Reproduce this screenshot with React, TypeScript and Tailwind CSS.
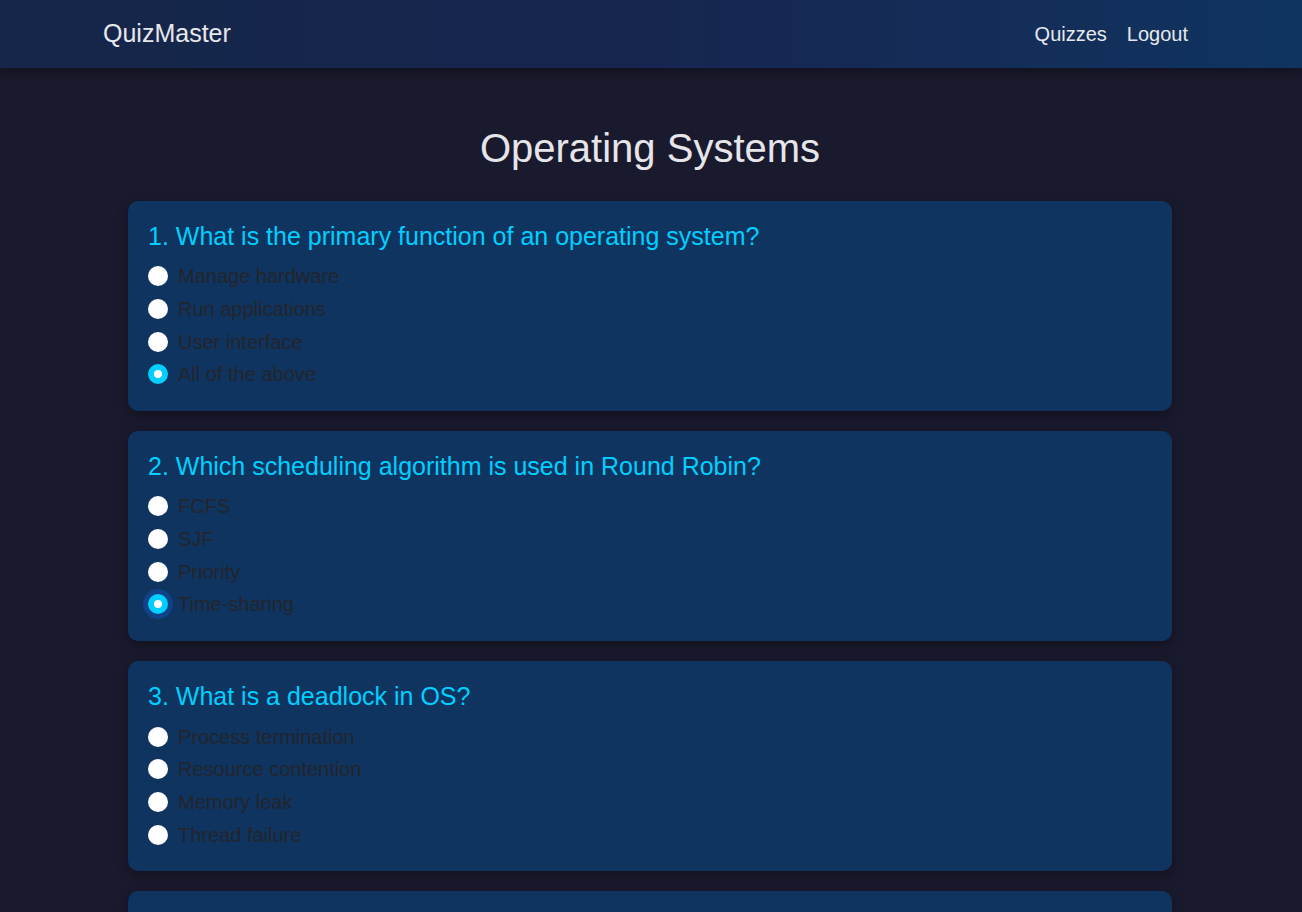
import React from "react";

type Question = {
  text: string;
  options: string[];
  selected?: number;
  focused?: boolean;
};

const questions: Question[] = [
  {
    text: "What is the primary function of an operating system?",
    options: ["Manage hardware", "Run applications", "User interface", "All of the above"],
    selected: 3,
  },
  {
    text: "Which scheduling algorithm is used in Round Robin?",
    options: ["FCFS", "SJF", "Priority", "Time-sharing"],
    selected: 3,
    focused: true,
  },
  {
    text: "What is a deadlock in OS?",
    options: ["Process termination", "Resource contention", "Memory leak", "Thread failure"],
  },
  {
    text: "Which memory management technique uses pages?",
    options: ["Segmentation", "Paging", "Swapping", "Compaction"],
  },
];

function Radio({ checked, focused }: { checked?: boolean; focused?: boolean }) {
  return (
    <span
      className={
        "relative flex h-5 w-5 shrink-0 items-center justify-center rounded-full " +
        (checked ? "bg-[#00cfff] " : "bg-white ") +
        (focused ? "ring-[5px] ring-[#0f4287]" : "")
      }
    >
      {checked && <span className="h-2 w-2 rounded-full bg-white" />}
    </span>
  );
}

export default function App() {
  return (
    <div
      className="min-h-screen bg-[#1a1a2e] pb-10"
      style={{ fontFamily: '"Liberation Sans", Arial, sans-serif' }}
    >
      <header className="flex h-[68px] items-center justify-between bg-gradient-to-r from-[#152649] via-[#162650] to-[#0f3460] pl-[103px] pr-[104px] shadow-[0_4px_10px_rgba(0,0,0,0.35)]">
        <span className="text-[25px] text-[#e8e8ec]">QuizMaster</span>
        <nav className="flex text-[20px] text-[#e8e8ec]">
          <a href="#" className="px-[10px]">Quizzes</a>
          <a href="#" className="px-[10px]">Logout</a>
        </nav>
      </header>

      <main className="ml-[128px] w-[1044px]">
        <h1 className="mt-[56px] mb-[29px] text-center text-[40px] leading-[48px] text-[#e6e6ea]">
          Operating Systems
        </h1>

        <div className="flex flex-col gap-[20.5px]">
          {questions.map((q, qi) => (
            <div
              key={qi}
              className="rounded-[10px] bg-[#0f3460] p-5 shadow-[0_4px_12px_rgba(0,0,0,0.35)]"
            >
              <h4 className="mb-[9px] text-[25px] leading-[30px] text-[#00cfff]">
                {qi + 1}. {q.text}
              </h4>
              <div className="flex flex-col">
                {q.options.map((opt, oi) => (
                  <label key={oi} className="flex h-[32.67px] items-center gap-[10px]">
                    <Radio checked={q.selected === oi} focused={q.focused && q.selected === oi} />
                    <span className="text-[20px] text-[#22252c]">{opt}</span>
                  </label>
                ))}
              </div>
            </div>
          ))}
        </div>
      </main>
    </div>
  );
}
